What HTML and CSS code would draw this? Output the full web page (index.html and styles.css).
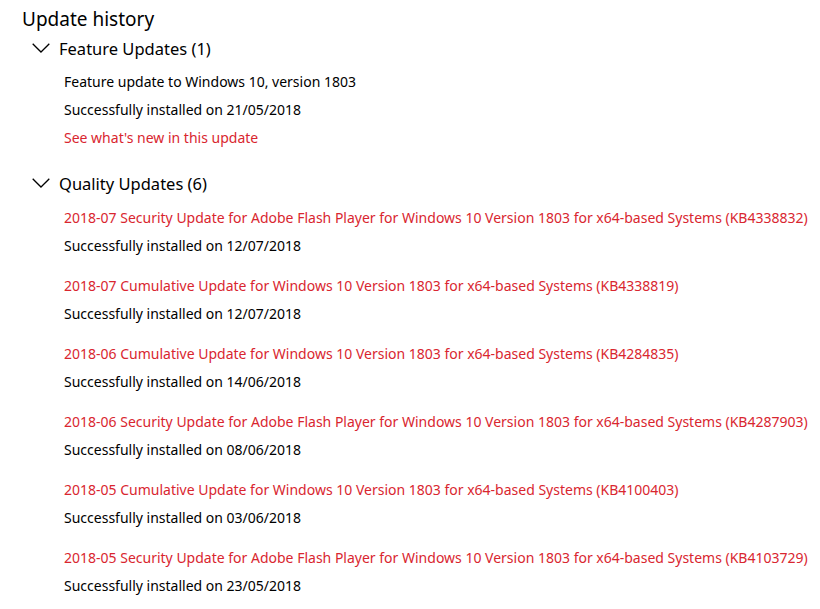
FILE: index.html
```html
<!DOCTYPE html>
<html lang="en">
<head>
    <meta charset="UTF-8">
    <title>Update history</title>
    <link rel="stylesheet" href="styles.css">
</head>
<body>
    <div class="history">
        <h1 class="title">Update history</h1>

        <div class="group">
            <div class="group-head">
                <svg class="chevron" width="18" height="10" viewBox="0 0 18 10"><path d="M0.7 0.7 L9 9 L17.3 0.7" fill="none" stroke="#000" stroke-width="1.3"/></svg>
                <span>Feature Updates (1)</span>
            </div>
            <div class="items">
                <div class="update">
                    <div class="line">Feature update to Windows 10, version 1803</div>
                    <div class="line">Successfully installed on 21/05/2018</div>
                    <a class="line link" href="#">See what's new in this update</a>
                </div>
            </div>
        </div>

        <div class="group">
            <div class="group-head">
                <svg class="chevron" width="18" height="10" viewBox="0 0 18 10"><path d="M0.7 0.7 L9 9 L17.3 0.7" fill="none" stroke="#000" stroke-width="1.3"/></svg>
                <span>Quality Updates (6)</span>
            </div>
            <div class="items">
                <div class="update">
                    <a class="line link" href="#">2018-07 Security Update for Adobe Flash Player for Windows 10 Version 1803 for x64-based Systems (KB4338832)</a>
                    <div class="line">Successfully installed on 12/07/2018</div>
                </div>
                <div class="update">
                    <a class="line link" href="#">2018-07 Cumulative Update for Windows 10 Version 1803 for x64-based Systems (KB4338819)</a>
                    <div class="line">Successfully installed on 12/07/2018</div>
                </div>
                <div class="update">
                    <a class="line link" href="#">2018-06 Cumulative Update for Windows 10 Version 1803 for x64-based Systems (KB4284835)</a>
                    <div class="line">Successfully installed on 14/06/2018</div>
                </div>
                <div class="update">
                    <a class="line link" href="#">2018-06 Security Update for Adobe Flash Player for Windows 10 Version 1803 for x64-based Systems (KB4287903)</a>
                    <div class="line">Successfully installed on 08/06/2018</div>
                </div>
                <div class="update">
                    <a class="line link" href="#">2018-05 Cumulative Update for Windows 10 Version 1803 for x64-based Systems (KB4100403)</a>
                    <div class="line">Successfully installed on 03/06/2018</div>
                </div>
                <div class="update">
                    <a class="line link" href="#">2018-05 Security Update for Adobe Flash Player for Windows 10 Version 1803 for x64-based Systems (KB4103729)</a>
                    <div class="line">Successfully installed on 23/05/2018</div>
                </div>
            </div>
        </div>
    </div>
</body>
</html>
```

FILE: styles.css
```css
body {
    margin: 0;
    background: #fff;
    color: #000;
    font-family: 'Noto Sans', 'Open Sans', sans-serif;
}
.history {
    padding: 5px 0 0 22px;
}
.title {
    margin: 0;
    height: 28px;
    line-height: 28px;
    font-size: 19px;
    font-weight: normal;
}
.group-head {
    display: flex;
    align-items: center;
    height: 28px;
    margin-top: 1px;
    font-size: 16.5px;
}
.chevron {
    margin-left: 10px;
    margin-right: 9px;
}
.group + .group {
    margin-top: 17px;
}
.items {
    padding-left: 42px;
    margin-top: 6px;
}
.group + .group .items {
    margin-top: 7px;
}
.update + .update {
    margin-top: 12px;
}
.line {
    display: block;
    height: 28px;
    line-height: 28px;
    font-size: 14px;
    white-space: nowrap;
}
.link {
    color: #d9262f;
    text-decoration: none;
}
```
